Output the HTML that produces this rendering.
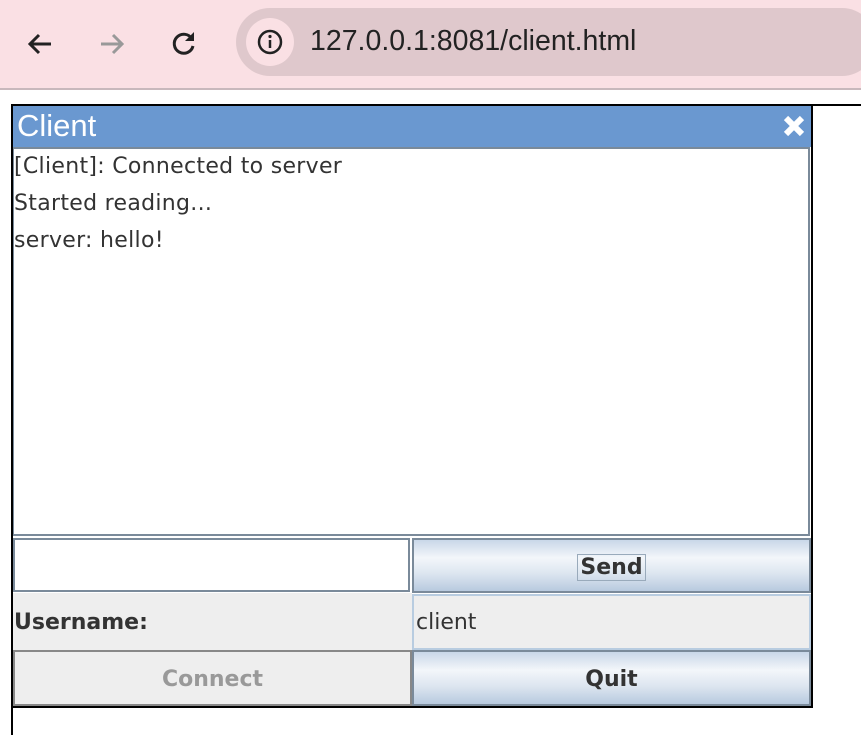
<!DOCTYPE html>
<html><head><style>
body{margin:0;width:861px;height:735px;position:relative;background:#fff;font-family:"DejaVu Sans","Liberation Sans",sans-serif;overflow:hidden}
.bar{position:absolute;left:0;top:0;width:861px;height:88px;background:#fae0e4;border-bottom:2px solid #c8b8bc}
.url{position:absolute;left:236px;top:8px;width:640px;height:68px;border-radius:34px;background:#dfc8cc}
.ic{position:absolute;left:246px;top:18px;width:48px;height:48px;border-radius:24px;background:#fae0e4}
.urltext{position:absolute;left:310px;top:25px;font-family:"Liberation Sans",sans-serif;font-size:28.5px;color:#222}
.a{position:absolute}
.btn{position:absolute;background:linear-gradient(#c9d7e8,#f3f6fa 35%,#dde6f0 65%,#b8cadf);border:2px solid #7a8a9a;box-sizing:border-box;text-align:center;font-weight:bold;font-size:22px;color:#333}
</style></head><body>
<div class="bar"></div>
<svg class="a" style="left:24px;top:28px" width="32" height="32" viewBox="0 0 32 32"><path d="M27 16H7M15 7l-9 9 9 9" stroke="#222" stroke-width="3" fill="none"/></svg>
<svg class="a" style="left:96px;top:28px" width="32" height="32" viewBox="0 0 32 32"><path d="M5 16h20M17 7l9 9-9 9" stroke="#999" stroke-width="3" fill="none"/></svg>
<svg class="a" style="left:168px;top:27px" width="32" height="32" viewBox="0 0 32 32"><path d="M24 12A9.5 9.5 0 1 0 25 19" stroke="#222" stroke-width="3" fill="none"/><path d="M26 5v9h-9z" fill="#222"/></svg>
<div class="url"></div><div class="ic"></div>
<svg class="a" style="left:256px;top:28px" width="28" height="28" viewBox="0 0 28 28"><circle cx="14" cy="14" r="11" stroke="#222" stroke-width="2.5" fill="none"/><path d="M14 12v8" stroke="#222" stroke-width="2.5"/><circle cx="14" cy="8.5" r="1.6" fill="#222"/></svg>
<div class="urltext">127.0.0.1:8081/client.html</div>

<div class="a" style="left:11px;top:104px;width:850px;height:2px;background:#000"></div>
<div class="a" style="left:11px;top:104px;width:2px;height:631px;background:#000"></div>
<div class="a" style="left:811px;top:104px;width:2px;height:604px;background:#000"></div>
<div class="a" style="left:11px;top:706px;width:802px;height:2px;background:#000"></div>

<div class="a" style="left:13px;top:106px;width:798px;height:41px;background:#6a98d0"></div>
<div class="a" style="left:17px;top:108px;font-family:'Liberation Sans',sans-serif;font-size:31px;color:#fff">Client</div>
<svg class="a" style="left:782px;top:114px" width="24" height="24" viewBox="0 0 24 24"><path d="M4 4L20 20M20 4L4 20" stroke="#fff" stroke-width="6"/></svg>

<div class="a" style="left:13px;top:147px;width:797px;height:389px;border:2px solid #7a8a9a;border-left:1px solid #7a8a9a;box-sizing:border-box;background:#fff"></div>
<div class="a" style="left:14px;top:148px;font-size:22px;letter-spacing:0.3px;color:#333;line-height:37px">[Client]: Connected to server<br>Started reading...<br>server: hello!</div>

<div class="a" style="left:13px;top:538px;width:397px;height:54px;border:2px solid #7a8a9a;box-sizing:border-box;background:#fff"></div>
<div class="btn" style="left:412px;top:538px;width:399px;height:55px;line-height:56px"><span style="border:1px solid #9ab;padding:0 2px">Send</span></div>

<div class="a" style="left:13px;top:593px;width:399px;height:57px;background:#eeeeee"></div>
<div class="a" style="left:14px;top:610px;font-size:22px;font-weight:bold;color:#333">Username:</div>
<div class="a" style="left:412px;top:594px;width:399px;height:56px;background:#eee;border:2px solid #b8cce0;box-sizing:border-box"></div>
<div class="a" style="left:416px;top:610px;font-size:22px;color:#333">client</div>

<div class="a" style="left:13px;top:650px;width:399px;height:56px;background:#eee;border:2px solid #888;box-sizing:border-box;text-align:center;line-height:56px;font-weight:bold;font-size:22px;color:#999">Connect</div>
<div class="btn" style="left:412px;top:650px;width:399px;height:56px;line-height:56px">Quit</div>
</body></html>
